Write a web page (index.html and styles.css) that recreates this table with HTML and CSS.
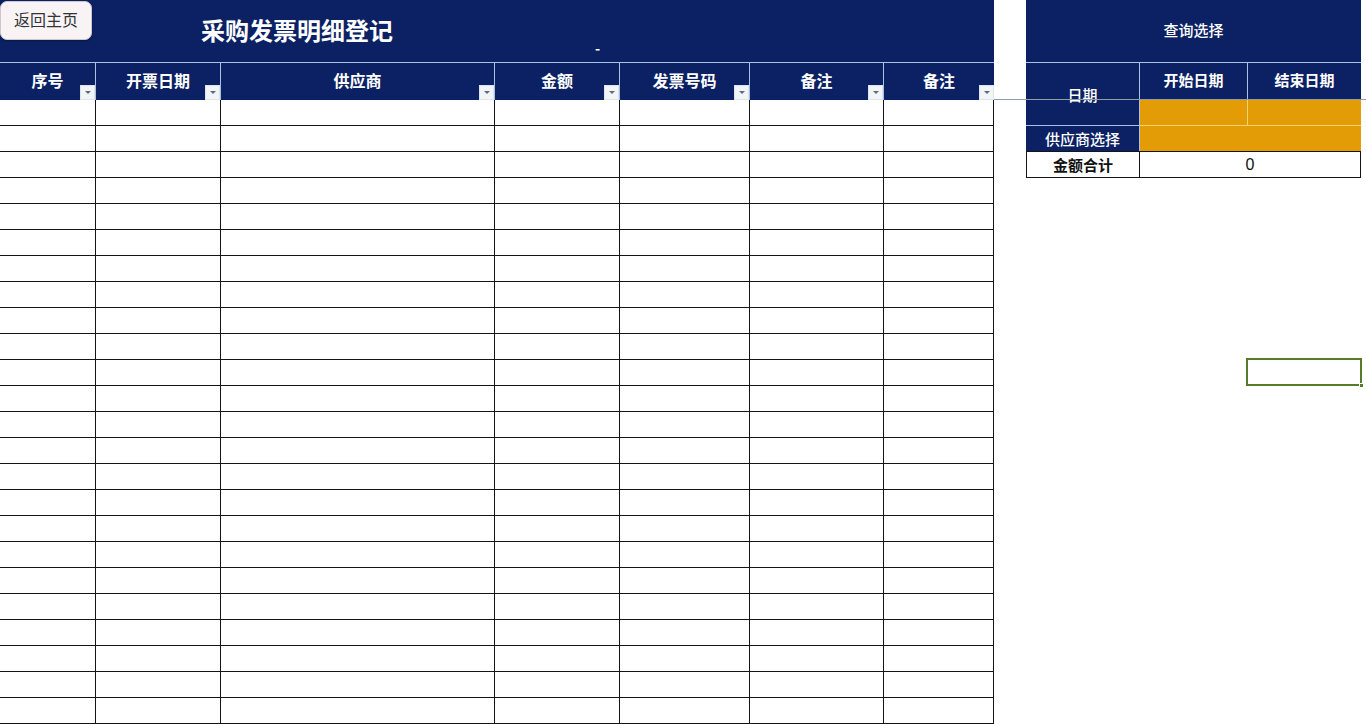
FILE: index.html
```html
<!DOCTYPE html>
<html lang="zh-CN">
<head>
<meta charset="utf-8">
<title>采购发票明细登记</title>
<link rel="stylesheet" href="styles.css">
</head>
<body>
<div class="page">
  <div class="sheet">
    <div class="banner">
      <button class="home-btn">返回主页</button>
      <div class="title">采购发票明细登记</div>
      <div class="dash">-</div>
    </div>
    <div class="grid">
      <div class="hcell">序号<span class="filter"></span></div>
      <div class="hcell">开票日期<span class="filter"></span></div>
      <div class="hcell">供应商<span class="filter"></span></div>
      <div class="hcell">金额<span class="filter"></span></div>
      <div class="hcell">发票号码<span class="filter"></span></div>
      <div class="hcell">备注<span class="filter"></span></div>
      <div class="hcell">备注<span class="filter"></span></div>
    </div>
    <div class="grid body" id="body"></div>
  </div>
  <div class="panel">
    <div class="panel-banner">查询选择</div>
    <div class="panel-grid">
      <div class="p-date">日期</div>
      <div class="p-head p-start">开始日期</div>
      <div class="p-head p-end">结束日期</div>
      <div class="p-orange p-o1"></div>
      <div class="p-orange p-o2"></div>
      <div class="p-label">供应商选择</div>
      <div class="p-orange p-sup"></div>
      <div class="p-sum-label">金额合计</div>
      <div class="p-sum-val">0</div>
    </div>
  </div>
</div>
<div class="overlay-line"></div>
<div class="selection"><span class="handle"></span></div>
<script src="script.js"></script>
</body>
</html>
```
FILE: script.js
```js
(function () {
  var body = document.getElementById('body');
  var html = '';
  for (var r = 0; r < 24; r++) {
    for (var c = 0; c < 7; c++) {
      html += '<div class="cell"></div>';
    }
  }
  body.innerHTML = html;
})();
```
FILE: styles.css
```css
* { box-sizing: border-box; }
html, body {
  margin: 0;
  padding: 0;
  background: #ffffff;
  overflow: hidden;
}
body {
  width: 1366px;
  height: 724px;
  position: relative;
  font-family: "Noto Sans CJK SC", "Noto Sans", sans-serif;
}
.page {
  display: flex;
  align-items: flex-start;
}
.sheet {
  width: 994px;
  flex: none;
}
.banner {
  height: 63px;
  background: #0b2163;
  border-bottom: 1px solid #a9c2e3;
  display: grid;
  grid-template-columns: 201px 394px auto;
  align-items: start;
}
.home-btn {
  margin-top: 1px;
  width: 92px;
  height: 39px;
  background: #f8f4f6;
  border: 1px solid #cfc6cc;
  border-radius: 7px;
  box-shadow: 0 1px 2px rgba(0,0,0,0.35);
  font-family: "Noto Sans CJK SC", sans-serif;
  font-size: 16px;
  color: #333333;
  padding: 0 0 2px 0;
  line-height: 35px;
}
.title {
  margin-top: 12px;
  font-size: 24px;
  font-weight: 700;
  color: #ffffff;
  line-height: 36px;
}
.dash {
  margin-top: 40px;
  color: #ffffff;
  font-size: 14px;
  font-weight: 700;
  line-height: 16px;
}
.grid {
  display: grid;
  grid-template-columns: 96px 125px 274px 125px 130px 134px 110px;
}
.hcell {
  position: relative;
  height: 37px;
  background: #0b2163;
  border-right: 1px solid #a9c2e3;
  color: #ffffff;
  font-weight: 700;
  font-size: 16px;
  display: flex;
  align-items: center;
  justify-content: center;
  padding-bottom: 3px;
}
.hcell:last-child { border-right: none; }
.filter {
  position: absolute;
  right: 0;
  bottom: 0;
  width: 15px;
  height: 15px;
  background: #f1f5f8;
  border: 1px solid #dde4ea;
}
.filter::after {
  content: "";
  position: absolute;
  left: 4px;
  top: 5px;
  border-left: 3px solid transparent;
  border-right: 3px solid transparent;
  border-top: 3px solid #5d6c78;
}
.cell {
  height: 26px;
  border-right: 1px solid #141414;
  border-bottom: 1px solid #141414;
}
.panel {
  margin-left: 32px;
  width: 335px;
  flex: none;
}
.panel-banner {
  height: 63px;
  background: #0b2163;
  border-bottom: 1px solid #a9c2e3;
  color: #ffffff;
  font-size: 15px;
  font-weight: 500;
  display: flex;
  align-items: center;
  justify-content: center;
  padding-bottom: 4px;
}
.panel-grid {
  display: grid;
  grid-template-columns: 114px 108px 113px;
  grid-template-rows: 36px 26px 26px 27px;
  font-size: 15px;
}
.p-date {
  grid-column: 1;
  grid-row: 1 / 3;
  background: #0b2163;
  color: #ffffff;
  font-weight: 500;
  border-right: 1px solid #a9c2e3;
  display: flex;
  align-items: center;
  justify-content: center;
}
.p-head {
  background: #0b2163;
  color: #ffffff;
  font-weight: 700;
  display: flex;
  align-items: center;
  justify-content: center;
  padding-bottom: 3px;
}
.p-start { grid-column: 2; grid-row: 1; border-right: 1px solid #a9c2e3; }
.p-end { grid-column: 3; grid-row: 1; }
.p-orange { background: #e39c05; }
.p-o1 { grid-column: 2; grid-row: 2; border-right: 1px solid #f3d36b; }
.p-o2 { grid-column: 3; grid-row: 2; }
.p-label {
  grid-column: 1;
  grid-row: 3;
  background: #0b2163;
  color: #ffffff;
  font-weight: 500;
  border-top: 1px solid #a9c2e3;
  border-right: 1px solid #a9c2e3;
  display: flex;
  align-items: center;
  justify-content: center;
}
.p-sup {
  grid-column: 2 / 4;
  grid-row: 3;
  border-top: 1px solid #f3d36b;
}
.p-sum-label {
  grid-column: 1;
  grid-row: 4;
  border: 1px solid #141414;
  color: #111111;
  font-weight: 700;
  display: flex;
  align-items: center;
  justify-content: center;
}
.p-sum-val {
  grid-column: 2 / 4;
  grid-row: 4;
  border-top: 1px solid #141414;
  border-bottom: 1px solid #141414;
  border-right: 1px solid #141414;
  color: #111111;
  font-family: "Liberation Sans", "Noto Sans", sans-serif;
  font-size: 16px;
  display: flex;
  align-items: center;
  justify-content: center;
}
.overlay-line {
  position: absolute;
  left: 994px;
  top: 99px;
  width: 372px;
  height: 1px;
  background: #8f9ea8;
}
.selection {
  position: absolute;
  left: 1246px;
  top: 358px;
  width: 116px;
  height: 28px;
  border: 2px solid #587a2c;
}
.handle {
  position: absolute;
  right: -4px;
  bottom: -4px;
  width: 5px;
  height: 5px;
  background: #587a2c;
  border: 1px solid #ffffff;
}
```
